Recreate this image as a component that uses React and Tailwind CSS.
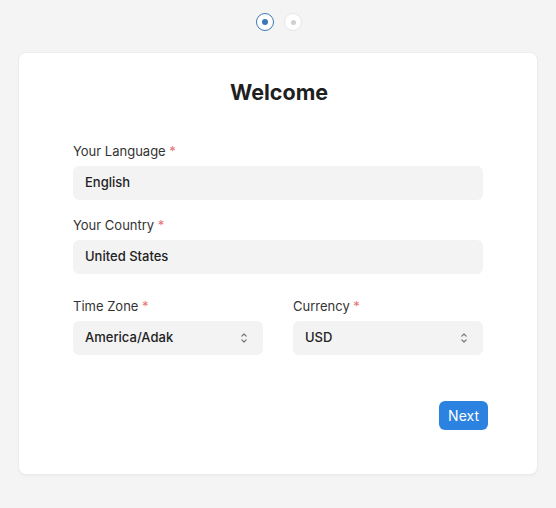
export default function App() {
  const Chevron = () => (
    <svg width="10" height="14" viewBox="0 0 10 14" fill="none" stroke="#777" strokeWidth="1.2" strokeLinecap="round" strokeLinejoin="round">
      <path d="M2.8 5.2 L5 3 L7.2 5.2" />
      <path d="M2.8 8.8 L5 11 L7.2 8.8" />
    </svg>
  );
  const Label = ({ children }) => (
    <div className="text-[13px] text-[#333] leading-none mb-[8px]">
      {children} <span className="text-[#e57373]">*</span>
    </div>
  );
  const field = "h-[34px] bg-[#f3f3f4] rounded-[6px] flex items-center text-[13px] font-medium text-[#222]";
  return (
    <div className="w-[556px] h-[508px] bg-[#f4f4f5] flex flex-col items-center" style={{ fontFamily: "Inter, 'Noto Sans', sans-serif" }}>
      <div className="h-[52px] flex items-center justify-center gap-[10px] pb-[8px] pl-[2px]">
        <div className="w-[18px] h-[18px] rounded-full border border-[#3a78b8] bg-white flex items-center justify-center">
          <div className="w-[6px] h-[6px] rounded-full bg-[#3a78b8]" />
        </div>
        <div className="w-[18px] h-[18px] rounded-full border border-[#e6e6e6] bg-white flex items-center justify-center">
          <div className="w-[5px] h-[5px] rounded-full bg-[#d0d0d0]" />
        </div>
      </div>
      <div className="w-[520px] h-[423px] bg-white rounded-[8px] border border-[#ececec] shadow-[0_1px_2px_rgba(0,0,0,0.04)] flex flex-col px-[54px]">
        <h1 className="text-[21.5px] font-bold text-[#1f1f1f] text-center mt-[29px] leading-none pl-[2px]">Welcome</h1>
        <div className="mt-[41px]">
          <Label>Your Language</Label>
          <div className={`${field} w-[410px] px-[12px]`}>English</div>
        </div>
        <div className="mt-[19px]">
          <Label>Your Country</Label>
          <div className={`${field} w-[410px] px-[12px]`}>United States</div>
        </div>
        <div className="mt-[26px] flex gap-[30px] w-[410px]">
          <div className="flex-1">
            <Label>Time Zone</Label>
            <div className={`${field} justify-between pl-[12px] pr-[14px]`}>
              America/Adak <Chevron />
            </div>
          </div>
          <div className="flex-1">
            <Label>Currency</Label>
            <div className={`${field} justify-between pl-[12px] pr-[14px]`}>
              USD <Chevron />
            </div>
          </div>
        </div>
        <div className="flex justify-end mt-[46px] mr-[-5px]">
          <button className="h-[29px] px-[9px] rounded-[6px] bg-[#2b82e0] text-white text-[14px]">Next</button>
        </div>
      </div>
    </div>
  );
}
